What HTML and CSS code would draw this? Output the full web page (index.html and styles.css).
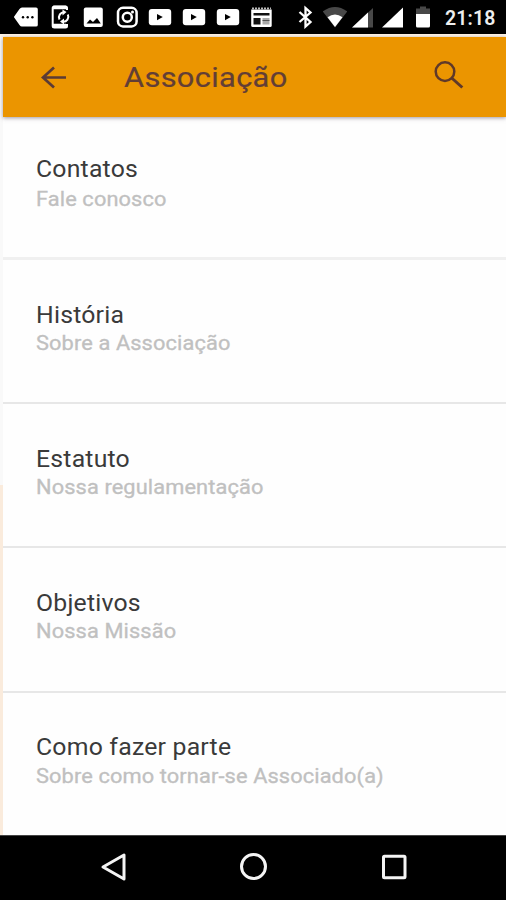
FILE: index.html
```html
<!DOCTYPE html>
<html lang="pt-BR">
<head>
<meta charset="utf-8">
<title>Associação</title>
<link rel="stylesheet" href="styles.css">
</head>
<body>
<svg class="defs" width="0" height="0">
  <symbol id="video" viewBox="0 0 24 24"><rect x=".8" y="4" width="22.4" height="16.2" rx="3" fill="#fff"/><path d="M9 9v6.200l5.800-3.100z" fill="#000"/></symbol>
</svg>
<div class="phone">
  <div class="status">
    <div class="notifications">
      <svg viewBox="0 0 24 24"><path d="M-.2 12 5.500 4Q6.500 2.500 8 2.500H22q1.800 0 1.800 1.800V20q0 1.600-1.800 1.600H8q-1.500 0-2.500-1.500z" fill="#fff"/><g fill="#000"><circle cx="9" cy="12.300" r="1.200"/><circle cx="13.700" cy="12.300" r="1.200"/><circle cx="18.400" cy="12.300" r="1.200"/></g></svg>
      <svg viewBox="0 0 24 24"><path d="M19 5V3q0-1.500-1.500-1.500H6.500Q4.700 1.500 4.700 3v18q0 1.500 1.800 1.500h11Q19 22.500 19 21v-2" fill="none" stroke="#fff" stroke-width="2"/><path d="M5 2.500h13M5 20.500h13" stroke="#fff" stroke-width="3.500"/><path d="M11.500 14.500a5 5 0 0 1 5-7.200M19.800 9.500a5 5 0 0 1-5 7.200" fill="none" stroke="#fff" stroke-width="2"/><path d="m14.500 4.500 4 2.500-4 3.500zM16 13.500v6l-4-3z" fill="#fff"/></svg>
      <svg viewBox="0 0 24 24"><rect x="2.800" y="2.500" width="19" height="19.500" rx="2" fill="#fff"/><path d="m5.500 18.500 3.500-4 3 2.500 4-4 3.800 5.500z" fill="#000"/></svg>
      <svg viewBox="0 0 24 24"><g fill="none" stroke="#fff" stroke-width="2.500"><rect x="3" y="2.800" width="18.600" height="18.600" rx="5"/><circle cx="12.300" cy="12.200" r="4.500"/></g><circle cx="17.500" cy="7" r="1.500" fill="#fff"/></svg>
      <svg><use href="#video"/></svg>
      <svg><use href="#video"/></svg>
      <svg><use href="#video"/></svg>
      <svg viewBox="0 0 24 24"><path d="M2.200 4.500h20.500v16q0 1.500-1.500 1.500H3.700q-1.500 0-1.500-1.500z" fill="#fff"/><path d="M3 3.500h19" stroke="#bbb" stroke-width="2" stroke-dasharray="2 1"/><path d="M4.500 8h16v2.500h-16zM4.500 13h7v6.500h-7z" fill="#111"/><path d="M13.500 13h7v6.500h-7z" fill="#aaa"/><path d="M13.500 15.500h7" stroke="#555"/></svg>
    </div>
    <div class="system">
      <svg viewBox="0 0 24 24"><path d="m6.500 7 11 10-5 4.500V3l5 4.500-11 9.500" fill="none" stroke="#fff" stroke-width="2.300"/></svg>
      <svg viewBox="0 0 24 24"><path d="M-.2 6.500Q12-2.500 24.200 6.500L12 22.500z" fill="#484848"/><path d="M4.500 12.200q7.500-5.500 15 0L12 22z" fill="#fff"/></svg>
      <svg viewBox="0 0 24 24"><path d="M21 3v19.500H0z" fill="#484848"/><path d="M16 7.500v15H0z" fill="#fff"/></svg>
      <svg viewBox="0 0 24 24"><path d="M21 2.500v20H0z" fill="#fff"/></svg>
      <svg viewBox="0 0 24 24"><path d="M5 3.500h4v-2h6v2h4V9H5z" fill="#484848"/><path d="M5 9h14v12q0 1.500-1.500 1.500h-11Q5 22.500 5 21z" fill="#fff"/></svg>
    </div>
    <span class="clock">21:18</span>
  </div>
  <div class="app">
    <header class="bar">
      <svg class="back" viewBox="0 0 28 28"><path d="M26 14.500H3M14 4.500 3 14.500l11 10" fill="none" stroke="#5b3b35" stroke-width="2.700"/></svg>
      <h1>Associação</h1>
      <svg class="search" viewBox="0 0 30 30"><circle cx="11" cy="11.600" r="9.300" fill="none" stroke="#5f3929" stroke-width="2.500"/><path d="m17.700 18 10.600 9.500" stroke="#5f3929" stroke-width="3"/></svg>
    </header>
    <main class="list">
      <section class="row"><h2>Contatos</h2><p>Fale conosco</p></section>
      <section class="row"><h2>História</h2><p>Sobre a Associação</p></section>
      <section class="row"><h2>Estatuto</h2><p>Nossa regulamentação</p></section>
      <section class="row"><h2>Objetivos</h2><p>Nossa Missão</p></section>
      <section class="row"><h2>Como fazer parte</h2><p>Sobre como tornar-se Associado(a)</p></section>
    </main>
  </div>
  <nav class="nav">
    <svg viewBox="0 0 32 32"><path d="M5 16 26 4v24z" fill="none" stroke="#f4f4f4" stroke-width="3" stroke-linejoin="round"/></svg>
    <svg viewBox="0 0 32 32"><circle cx="15.500" cy="15.500" r="12" fill="none" stroke="#f4f4f4" stroke-width="3"/></svg>
    <svg viewBox="0 0 32 32"><rect x="6.500" y="5.200" width="21.500" height="21.500" rx="1" fill="none" stroke="#f4f4f4" stroke-width="3"/></svg>
  </nav>
</div>
</body>
</html>
```
FILE: styles.css
```css
* { box-sizing: border-box; }
body { margin: 0; font-family: Roboto, "Noto Sans", sans-serif; background: #fff; }
h1, h2, p { margin: 0; white-space: nowrap; transform-origin: left center; }
svg { display: block; flex: none; }
.defs { display: none; }
.phone { width: 506px; height: 900px; display: flex; flex-direction: column; overflow: hidden; }
.status { height: 34px; flex: none; background: #000; display: flex; align-items: flex-start; padding: 5px 0 0 14px; }
.status svg { width: 24px; height: 24px; }
.notifications { display: flex; gap: 9.6px; width: 279px; }
.system { display: flex; gap: 5.6px; width: 152px; }
.clock { color: #eee; font-size: 19.5px; font-weight: 600; line-height: 28px; letter-spacing: 0.1px; }
.app { height: 801px; flex: none; padding: 3px 0 0 3px; background: linear-gradient(#fdf3e6 3px, #f9f9f9 3px, #f9f9f9 451px, #faebdc 451px); }
.bar { position: relative; height: 80px; background: #eb9500; display: flex; align-items: center; box-shadow: 0 1px 4px rgba(80, 70, 90, 0.55); }
.back { width: 28px; height: 28px; margin-left: 37px; }
.bar h1 { margin: 2px 0 0 55.5px; width: 160px; color: #623e36; font-size: 28px; font-weight: 400; line-height: 36px; letter-spacing: 0.3px; transform: scaleX(1.1); -webkit-text-stroke: 0.2px #623e36; }
.search { width: 30px; height: 30px; margin: 0 42px 5px auto; }
.list { height: 718px; background: #fefefe; display: grid; grid-template-rows: 143px 144px 144px 145px 142px; }
.row { padding: 41px 0 0 33px; border-bottom: 2px solid #e7e7e7; }
.row:first-child { padding-top: 38px; border-bottom: 3px solid #f0f0f0; }
.row:last-child { padding-top: 40px; border-bottom: 0; }
.row h2 { font-size: 23.5px; font-weight: 400; line-height: 28px; color: #3a3a3a; letter-spacing: 0.2px; transform: scaleX(1.055); }
.row p { font-size: 20px; line-height: 24px; margin-top: 2px; color: #c0c0c0; letter-spacing: 0.1px; transform: scaleX(1.09); -webkit-text-stroke: 0.3px #c0c0c0; }
.row:first-child p { margin-top: 4px; }
.row:last-child p { margin-top: 3px; }
.nav { height: 65px; flex: none; background: #000; border-top: 1px solid #444; display: flex; justify-content: space-between; padding: 15px 97px 0 98px; }
.nav svg { width: 32px; height: 32px; }
```
